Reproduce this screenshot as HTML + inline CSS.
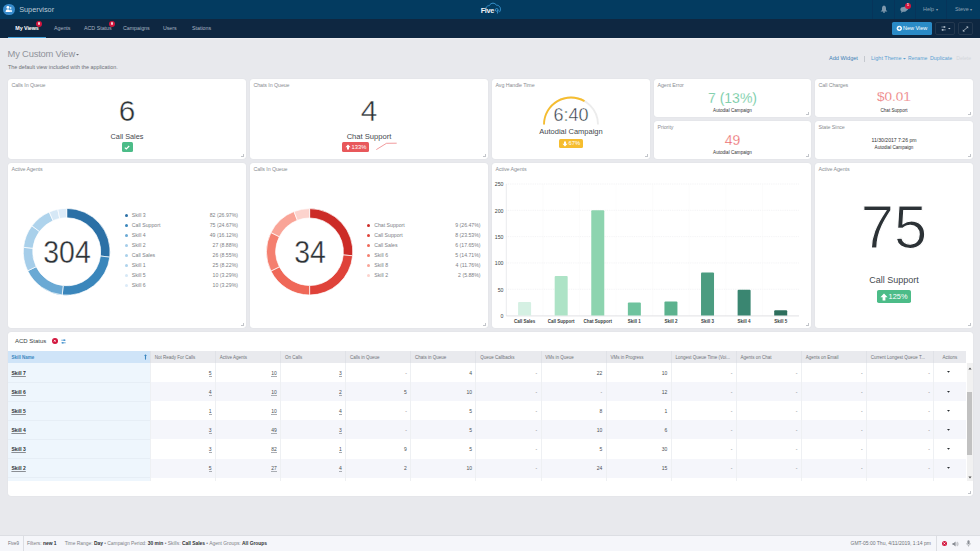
<!DOCTYPE html>
<html><head><meta charset="utf-8">
<style>
*{box-sizing:border-box;margin:0;padding:0}
html,body{width:980px;height:551px;overflow:hidden;background:#e8e9ed;font-family:"Liberation Sans",sans-serif;position:relative}
.a{position:absolute;white-space:nowrap;line-height:1}
.card{position:absolute;background:#fff;border-radius:3px;box-shadow:0 0 1px rgba(40,45,60,.12)}
.ct{position:absolute;left:3.5px;top:2.6px;font-size:5.3px;color:#8a8d92;line-height:6px;white-space:nowrap;letter-spacing:-0.08px}
.rh{position:absolute;right:2.4px;bottom:2.4px;width:2.6px;height:2.6px;border-right:0.8px solid #c2c5ca;border-bottom:0.8px solid #c2c5ca}
.c{text-align:center}
</style></head><body>

<!-- top bar -->
<div class="a" style="left:0;top:0;width:980px;height:19px;background:#033b60"></div>
<div class="a" style="left:0;top:19px;width:980px;height:18.8px;background:#0e2741"></div>
<div class="a" style="left:0;top:37.8px;width:980px;height:1.5px;background:#eeeff2"></div>


<!-- avatar -->
<div class="a" style="left:3.1px;top:3.7px;width:11.6px;height:11.6px;border-radius:50%;background:#378ccd"></div>
<svg class="a" style="left:0;top:0" width="20" height="19" viewBox="0 0 20 19"><circle cx="7.9" cy="7.4" r="1.45" fill="#fff"/><path d="M5.6 12 C5.7 9.9 6.6 9.3 7.9 9.3 C9.2 9.3 10.1 9.9 10.2 12 Z" fill="#fff"/><circle cx="10.6" cy="8" r="0.9" fill="#cfe6f7"/><path d="M9.9 12 L9.9 10.2 C10.2 9.5 11 9.5 11.3 9.7 C11.9 10 12.1 10.8 12.1 12 Z" fill="#cfe6f7"/></svg>
<div class="a" style="left:19.2px;top:6px;font-size:7.3px;color:#bccad6">Supervisor</div>

<!-- five9 logo -->
<svg class="a" style="left:476px;top:0" width="30" height="18" viewBox="476 0 30 18"><path d="M485.8 8.2 C486.4 6.3 487.9 5.5 489.3 5.7 C490 3.9 491.6 3.2 493 3.2 C494.6 3.2 495.8 4.1 496.4 5.2 C498.1 5.1 499.6 6.1 500.2 7.6 C500.8 9.1 500.4 10.8 499.3 12.2" fill="none" stroke="#3b98d6" stroke-width="0.9"/><circle cx="496.7" cy="9.9" r="1.35" fill="none" stroke="#3b98d6" stroke-width="0.9"/><path d="M498 10 L497.4 13.6" stroke="#3b98d6" stroke-width="0.9"/></svg>
<div class="a" style="left:480.7px;top:7.4px;font-size:7.4px;font-weight:700;color:#eef2f6;letter-spacing:-0.35px">Five</div>

<!-- right header -->
<div class="a" style="left:872px;top:0;width:1px;height:19px;background:#06345a"></div>
<div class="a" style="left:894px;top:0;width:1px;height:19px;background:#06345a"></div>
<div class="a" style="left:915px;top:0;width:1px;height:19px;background:#06345a"></div>
<div class="a" style="left:946px;top:0;width:1px;height:19px;background:#06345a"></div>
<svg class="a" style="left:879.5px;top:4.5px" width="8" height="8" viewBox="0 0 8 8"><path d="M4 0.4 C5.8 0.6 6 2.2 6 3.6 L6 4.9 L7.4 6.4 L0.6 6.4 L2 4.9 L2 3.6 C2 2.2 2.2 0.6 4 0.4 Z" fill="#7d97ab"/><circle cx="4" cy="7" r="0.9" fill="#7d97ab"/></svg>
<svg class="a" style="left:900px;top:5px" width="9" height="9" viewBox="0 0 9 9"><ellipse cx="3.6" cy="4.4" rx="3.2" ry="2.3" fill="#7d97ab"/><path d="M1.6 6 L1 8 L3.4 6.6 Z" fill="#7d97ab"/><ellipse cx="5.4" cy="3.6" rx="2.8" ry="2" fill="#7d97ab"/></svg>
<div class="a" style="left:904.8px;top:2.8px;width:6.4px;height:6.4px;border-radius:50%;background:#d2153d"></div>
<div class="a" style="left:906.9px;top:4.1px;font-size:3.6px;color:#fff;font-weight:700">1</div>
<div class="a" style="left:923px;top:6.8px;font-size:5.4px;color:#8ea2b4">Help <span style="font-size:4px">&#9662;</span></div>
<div class="a" style="left:955px;top:6.8px;font-size:5.4px;color:#8ea2b4">Steve <span style="font-size:4px">&#9662;</span></div>

<!-- nav -->
<div class="a" style="left:15.3px;top:26.3px;font-size:5.4px;font-weight:700;color:#fff;letter-spacing:-0.1px">My Views</div>
<div class="a" style="left:54px;top:26.3px;font-size:5.3px;color:#a7b4c2">Agents</div>
<div class="a" style="left:84px;top:26.3px;font-size:5.3px;color:#a7b4c2">ACD Status</div>
<div class="a" style="left:122.9px;top:26.3px;font-size:5.3px;color:#a7b4c2">Campaigns</div>
<div class="a" style="left:162.9px;top:26.3px;font-size:5.3px;color:#a7b4c2">Users</div>
<div class="a" style="left:192px;top:26.3px;font-size:5.3px;color:#a7b4c2">Stations</div>
<div class="a" style="left:35.8px;top:20.6px;width:6.6px;height:6.6px;border-radius:50%;background:#d2153d"></div>
<div class="a" style="left:37.9px;top:22.3px;width:2.4px;height:2.4px;border-radius:50%;background:#f6c8d0"></div>
<div class="a" style="left:108.8px;top:20.6px;width:6.6px;height:6.6px;border-radius:50%;background:#d2153d"></div>
<div class="a" style="left:110.9px;top:22.3px;width:2.4px;height:2.4px;border-radius:50%;background:#f6c8d0"></div>
<div class="a" style="left:8px;top:36.5px;width:38px;height:1.6px;background:#46a3dc"></div>

<!-- nav buttons -->
<div class="a" style="left:892px;top:22px;width:39.6px;height:13px;background:#2a8bc7;border-radius:1.5px"></div>
<svg class="a" style="left:896px;top:25px" width="7" height="7" viewBox="0 0 7 7"><circle cx="3.3" cy="3.3" r="2.6" fill="#fff"/><path d="M3.3 1.9 V4.7 M1.9 3.3 H4.7" stroke="#2a8bc7" stroke-width="0.9"/></svg>
<div class="a" style="left:903.1px;top:26px;font-size:5.6px;color:#fff;font-weight:400;letter-spacing:-0.08px">New View</div>
<div class="a" style="left:935.3px;top:22px;width:19.6px;height:13px;border:1px solid #23384f;border-radius:2px"></div>
<svg class="a" style="left:940.5px;top:26.3px" width="11" height="5" viewBox="0 0 11 5"><path d="M0.3 1 H4.8 M0.3 3.9 H4.8" stroke="#9aa8b6" stroke-width="0.7"/><rect x="2.6" y="0.2" width="1.4" height="1.6" fill="#b0bcc8"/><rect x="1" y="3.1" width="1.4" height="1.6" fill="#b0bcc8"/><path d="M7 2 L9.6 2 L8.3 3.2 Z" fill="#c5ced8"/></svg>
<div class="a" style="left:958px;top:22px;width:14.6px;height:13px;border:1px solid #23384f;border-radius:2px"></div>
<svg class="a" style="left:962px;top:25.5px" width="7" height="6" viewBox="0 0 7 6"><path d="M1.4 4.8 L5.6 1.2" stroke="#b6c1cc" stroke-width="0.8"/><path d="M4 0.6 H6.2 V2.6 Z M0.8 3.4 V5.4 H3 Z" fill="#b6c1cc"/></svg>


<!-- page title -->
<div class="a" style="left:7.6px;top:49.3px;font-size:9.4px;color:#90939b;letter-spacing:-0.2px">My Custom View</div>
<svg class="a" style="left:75.5px;top:54px" width="3" height="2" viewBox="0 0 3 2"><path d="M0 0 H3 L1.5 1.6 Z" fill="#6a6e76"/></svg>
<div class="a" style="left:8px;top:65.4px;font-size:5.4px;color:#6d7178">The default view included with the application.</div>
<div class="a" style="left:829px;top:56.4px;font-size:5.6px;color:#3d7fb6">Add Widget</div>
<div class="a" style="left:864px;top:55.8px;width:0.8px;height:6px;background:#c4c8ce"></div>
<div class="a" style="left:871px;top:56.4px;font-size:5.5px;color:#5a9fd2">Light Theme</div>
<svg class="a" style="left:902.5px;top:57.6px" width="3" height="2" viewBox="0 0 3 2"><path d="M0 0 H3 L1.5 1.6 Z" fill="#5a9fd2"/></svg>
<div class="a" style="left:908px;top:56.4px;font-size:5.1px;color:#5a9fd2">Rename</div>
<div class="a" style="left:930px;top:56.4px;font-size:5.3px;color:#5a9fd2">Duplicate</div>
<div class="a" style="left:956.3px;top:56.4px;font-size:5.1px;color:#d3d6db">Delete</div>

<!-- row 1 -->
<div class="card" style="left:8px;top:79px;width:238px;height:80px">
  <div class="ct">Calls In Queue</div><div class="rh"></div>
</div>
<div class="card" style="left:250px;top:79px;width:238px;height:80px">
  <div class="ct">Chats In Queue</div><div class="rh"></div>
</div>
<div class="card" style="left:492px;top:79px;width:158px;height:80px">
  <div class="ct">Avg Handle Time</div><div class="rh"></div>
</div>
<div class="card" style="left:654px;top:79px;width:157px;height:38px">
  <div class="ct">Agent Error</div><div class="rh"></div>
</div>
<div class="card" style="left:654px;top:121px;width:157px;height:38px">
  <div class="ct">Priority</div><div class="rh"></div>
</div>
<div class="card" style="left:815px;top:79px;width:158px;height:38px">
  <div class="ct">Call Charges</div><div class="rh"></div>
</div>
<div class="card" style="left:815px;top:121px;width:158px;height:38px">
  <div class="ct">State Since</div><div class="rh"></div>
</div>

<!-- row 2 -->
<div class="card" style="left:8px;top:163px;width:238px;height:165px">
  <div class="ct">Active Agents</div><div class="rh"></div>
</div>
<div class="card" style="left:250px;top:163px;width:238px;height:165px">
  <div class="ct">Calls In Queue</div><div class="rh"></div>
</div>
<div class="card" style="left:492px;top:163px;width:319px;height:165px">
  <div class="ct">Active Agents</div><div class="rh"></div>
</div>
<div class="card" style="left:815px;top:163px;width:158px;height:165px">
  <div class="ct">Active Agents</div><div class="rh"></div>
</div>

<!-- ACD -->
<div class="card" style="left:8px;top:332px;width:965px;height:164px">
  <div class="rh"></div>
</div>


<!-- row1 content -->
<div class="a c" style="left:8px;width:238px;top:96.4px;font-size:29.8px;color:#2c3236;-webkit-text-stroke:0.45px #fff">6</div>
<div class="a c" style="left:8px;width:238px;top:132.5px;font-size:7.3px;color:#454a4f">Call Sales</div>
<div class="a" style="left:121.6px;top:142px;width:11.3px;height:9.7px;background:#4cbc88;border-radius:1.5px"></div>
<svg class="a" style="left:124px;top:144.5px" width="6" height="5" viewBox="0 0 6 5"><path d="M0.8 2.6 L2.3 4 L5.2 1" fill="none" stroke="#fff" stroke-width="1.2"/></svg>

<div class="a c" style="left:250px;width:238px;top:96.4px;font-size:29.8px;color:#2c3236;-webkit-text-stroke:0.45px #fff">4</div>
<div class="a c" style="left:250px;width:238px;top:132.5px;font-size:7.6px;color:#454a4f">Chat Support</div>
<div class="a" style="left:342px;top:142px;width:27px;height:9.7px;background:#e8585b;border-radius:1.5px"></div>
<svg class="a" style="left:344.5px;top:144.1px" width="6" height="6" viewBox="0 0 6 6"><path d="M3 0.6 L5.6 3.2 L4 3.2 L4 5.6 L2 5.6 L2 3.2 L0.4 3.2 Z" fill="#fff"/></svg>
<div class="a" style="left:351.5px;top:144.6px;font-size:5.8px;color:#fff">133%</div>
<svg class="a" style="left:375px;top:142px" width="24" height="9" viewBox="0 0 24 9"><path d="M1.3 7.6 L11.5 1.3 L21.7 1.2" fill="none" stroke="#e8585b" stroke-width="0.6"/></svg>

<svg class="a" style="left:540px;top:93px" width="62" height="34" viewBox="0 0 62 34"><path d="M4 31.5 A27 27 0 0 1 58 31.5" fill="none" stroke="#ececec" stroke-width="1.8"/><path d="M4 31.5 A27 27 0 0 1 44.5 8.1" fill="none" stroke="#f6bd2f" stroke-width="1.8"/></svg>
<div class="a c" style="left:492px;width:158px;top:105.5px;font-size:18px;color:#2f3a44;-webkit-text-stroke:0.4px #fff">6:40</div>
<div class="a c" style="left:492px;width:158px;top:127.7px;font-size:7.5px;color:#454a4f">Autodial Campaign</div>
<div class="a" style="left:559px;top:138.5px;width:23.8px;height:9.8px;background:#f6bd2f;border-radius:1.5px"></div>
<svg class="a" style="left:561.5px;top:140.8px" width="6" height="6" viewBox="0 0 6 6"><path d="M3 5.4 L5.6 2.8 L4 2.8 L4 0.4 L2 0.4 L2 2.8 L0.4 2.8 Z" fill="#fff"/></svg>
<div class="a" style="left:568.5px;top:141.3px;font-size:5.8px;color:#fff">67%</div>

<div class="a c" style="left:654px;width:157px;top:90.8px;font-size:14px;color:#4cbc88;-webkit-text-stroke:0.3px #fff">7 (13%)</div>
<div class="a c" style="left:654px;width:157px;top:108.9px;font-size:4.6px;color:#333">Autodial Campaign</div>
<div class="a c" style="left:654px;width:157px;top:132.5px;font-size:14px;color:#e8585b;-webkit-text-stroke:0.3px #fff">49</div>
<div class="a c" style="left:654px;width:157px;top:151.1px;font-size:4.6px;color:#333">Autodial Campaign</div>
<div class="a c" style="left:815px;width:158px;top:90px;font-size:13.5px;color:#e8585b;-webkit-text-stroke:0.3px #fff">$0.01</div>
<div class="a c" style="left:815px;width:158px;top:108.9px;font-size:4.6px;color:#333">Chat Support</div>
<div class="a c" style="left:815px;width:158px;top:137.7px;font-size:5.1px;color:#333">11/30/2017 7:26 pm</div>
<div class="a c" style="left:815px;width:158px;top:145.6px;font-size:4.6px;color:#333">Autodial Campaign</div>

<!-- row2 content -->
<svg class="a" style="left:0;top:0" width="980" height="551" viewBox="0 0 980 551"><path d="M66.70 208.40 A43.4 43.4 0 0 1 109.77 257.17 L100.44 256.01 A34.0 34.0 0 0 0 66.70 217.80 Z" fill="#2b70a6" stroke="#fff" stroke-width="0.7"/>
<path d="M109.77 257.17 A43.4 43.4 0 0 1 62.22 294.97 L63.19 285.62 A34.0 34.0 0 0 0 100.44 256.01 Z" fill="#3a86bb" stroke="#fff" stroke-width="0.7"/>
<path d="M62.22 294.97 A43.4 43.4 0 0 1 27.71 270.86 L36.15 266.73 A34.0 34.0 0 0 0 63.19 285.62 Z" fill="#6aa9d4" stroke="#fff" stroke-width="0.7"/>
<path d="M27.71 270.86 A43.4 43.4 0 0 1 23.53 247.32 L32.88 248.29 A34.0 34.0 0 0 0 36.15 266.73 Z" fill="#a5cde9" stroke="#fff" stroke-width="0.7"/>
<path d="M23.53 247.32 A43.4 43.4 0 0 1 31.91 225.86 L39.44 231.48 A34.0 34.0 0 0 0 32.88 248.29 Z" fill="#a9d0ea" stroke="#fff" stroke-width="0.7"/>
<path d="M31.91 225.86 A43.4 43.4 0 0 1 49.27 212.06 L53.04 220.66 A34.0 34.0 0 0 0 39.44 231.48 Z" fill="#aed3ec" stroke="#fff" stroke-width="0.7"/>
<path d="M49.27 212.06 A43.4 43.4 0 0 1 57.79 209.32 L59.72 218.52 A34.0 34.0 0 0 0 53.04 220.66 Z" fill="#d6e8f6" stroke="#fff" stroke-width="0.7"/>
<path d="M57.79 209.32 A43.4 43.4 0 0 1 66.70 208.40 L66.70 217.80 A34.0 34.0 0 0 0 59.72 218.52 Z" fill="#dcebf8" stroke="#fff" stroke-width="0.7"/><path d="M309.60 208.60 A43.2 43.2 0 0 1 352.62 255.79 L343.26 254.92 A33.8 33.8 0 0 0 309.60 218.00 Z" fill="#cc2b27" stroke="#fff" stroke-width="0.7"/>
<path d="M352.62 255.79 A43.2 43.2 0 0 1 309.60 295.00 L309.60 285.60 A33.8 33.8 0 0 0 343.26 254.92 Z" fill="#df4239" stroke="#fff" stroke-width="0.7"/>
<path d="M309.60 295.00 A43.2 43.2 0 0 1 270.93 271.06 L279.34 266.87 A33.8 33.8 0 0 0 309.60 285.60 Z" fill="#ef6858" stroke="#fff" stroke-width="0.7"/>
<path d="M270.93 271.06 A43.2 43.2 0 0 1 270.93 232.54 L279.34 236.73 A33.8 33.8 0 0 0 279.34 266.87 Z" fill="#f47f6f" stroke="#fff" stroke-width="0.7"/>
<path d="M270.93 232.54 A43.2 43.2 0 0 1 293.99 211.52 L297.39 220.28 A33.8 33.8 0 0 0 279.34 236.73 Z" fill="#f9a497" stroke="#fff" stroke-width="0.7"/>
<path d="M293.99 211.52 A43.2 43.2 0 0 1 309.60 208.60 L309.60 218.00 A33.8 33.8 0 0 0 297.39 220.28 Z" fill="#fcd3cd" stroke="#fff" stroke-width="0.7"/></svg>
<div class="a c" style="left:26.9px;width:80px;top:236.6px;font-size:30.6px;color:#2c3236;-webkit-text-stroke:0.35px #fff;transform:scaleX(0.93)">304</div>
<div class="a c" style="left:269.6px;width:80px;top:236.6px;font-size:30.6px;color:#2c3236;-webkit-text-stroke:0.35px #fff;transform:scaleX(0.93)">34</div>
<div class="a" style="left:124.7px;top:213.9px;width:3px;height:3px;border-radius:50%;background:#2b70a6"></div><div class="a" style="left:131.8px;top:213.1px;font-size:5.2px;color:#7d8186">Skill 3</div><div class="a" style="left:138px;width:100px;text-align:right;top:213.1px;font-size:5.2px;color:#7d8186">82 (26.97%)</div>
<div class="a" style="left:124.7px;top:223.9px;width:3px;height:3px;border-radius:50%;background:#3a86bb"></div><div class="a" style="left:131.8px;top:223.1px;font-size:5.2px;color:#7d8186">Call Support</div><div class="a" style="left:138px;width:100px;text-align:right;top:223.1px;font-size:5.2px;color:#7d8186">75 (24.67%)</div>
<div class="a" style="left:124.7px;top:233.9px;width:3px;height:3px;border-radius:50%;background:#6aa9d4"></div><div class="a" style="left:131.8px;top:233.1px;font-size:5.2px;color:#7d8186">Skill 4</div><div class="a" style="left:138px;width:100px;text-align:right;top:233.1px;font-size:5.2px;color:#7d8186">49 (16.12%)</div>
<div class="a" style="left:124.7px;top:243.9px;width:3px;height:3px;border-radius:50%;background:#a5cde9"></div><div class="a" style="left:131.8px;top:243.1px;font-size:5.2px;color:#7d8186">Skill 2</div><div class="a" style="left:138px;width:100px;text-align:right;top:243.1px;font-size:5.2px;color:#7d8186">27 (8.88%)</div>
<div class="a" style="left:124.7px;top:253.9px;width:3px;height:3px;border-radius:50%;background:#a9d0ea"></div><div class="a" style="left:131.8px;top:253.1px;font-size:5.2px;color:#7d8186">Call Sales</div><div class="a" style="left:138px;width:100px;text-align:right;top:253.1px;font-size:5.2px;color:#7d8186">26 (8.55%)</div>
<div class="a" style="left:124.7px;top:263.9px;width:3px;height:3px;border-radius:50%;background:#aed3ec"></div><div class="a" style="left:131.8px;top:263.1px;font-size:5.2px;color:#7d8186">Skill 1</div><div class="a" style="left:138px;width:100px;text-align:right;top:263.1px;font-size:5.2px;color:#7d8186">25 (8.22%)</div>
<div class="a" style="left:124.7px;top:273.9px;width:3px;height:3px;border-radius:50%;background:#d6e8f6"></div><div class="a" style="left:131.8px;top:273.1px;font-size:5.2px;color:#7d8186">Skill 5</div><div class="a" style="left:138px;width:100px;text-align:right;top:273.1px;font-size:5.2px;color:#7d8186">10 (3.29%)</div>
<div class="a" style="left:124.7px;top:283.9px;width:3px;height:3px;border-radius:50%;background:#dcebf8"></div><div class="a" style="left:131.8px;top:283.1px;font-size:5.2px;color:#7d8186">Skill 6</div><div class="a" style="left:138px;width:100px;text-align:right;top:283.1px;font-size:5.2px;color:#7d8186">10 (3.29%)</div>
<div class="a" style="left:367px;top:223.7px;width:3px;height:3px;border-radius:50%;background:#cc2b27"></div><div class="a" style="left:374.2px;top:222.9px;font-size:5.2px;color:#7d8186">Chat Support</div><div class="a" style="left:380.6px;width:100px;text-align:right;top:222.9px;font-size:5.2px;color:#7d8186">9 (26.47%)</div>
<div class="a" style="left:367px;top:233.7px;width:3px;height:3px;border-radius:50%;background:#df4239"></div><div class="a" style="left:374.2px;top:232.9px;font-size:5.2px;color:#7d8186">Call Support</div><div class="a" style="left:380.6px;width:100px;text-align:right;top:232.9px;font-size:5.2px;color:#7d8186">8 (23.53%)</div>
<div class="a" style="left:367px;top:243.7px;width:3px;height:3px;border-radius:50%;background:#ef6858"></div><div class="a" style="left:374.2px;top:242.9px;font-size:5.2px;color:#7d8186">Call Sales</div><div class="a" style="left:380.6px;width:100px;text-align:right;top:242.9px;font-size:5.2px;color:#7d8186">6 (17.65%)</div>
<div class="a" style="left:367px;top:253.7px;width:3px;height:3px;border-radius:50%;background:#f47f6f"></div><div class="a" style="left:374.2px;top:252.9px;font-size:5.2px;color:#7d8186">Skill 6</div><div class="a" style="left:380.6px;width:100px;text-align:right;top:252.9px;font-size:5.2px;color:#7d8186">5 (14.71%)</div>
<div class="a" style="left:367px;top:263.7px;width:3px;height:3px;border-radius:50%;background:#f9a497"></div><div class="a" style="left:374.2px;top:262.9px;font-size:5.2px;color:#7d8186">Skill 8</div><div class="a" style="left:380.6px;width:100px;text-align:right;top:262.9px;font-size:5.2px;color:#7d8186">4 (11.76%)</div>
<div class="a" style="left:367px;top:273.7px;width:3px;height:3px;border-radius:50%;background:#fcd3cd"></div><div class="a" style="left:374.2px;top:272.9px;font-size:5.2px;color:#7d8186">Skill 2</div><div class="a" style="left:380.6px;width:100px;text-align:right;top:272.9px;font-size:5.2px;color:#7d8186">2 (5.88%)</div>
<svg class="a" style="left:0;top:0" width="980" height="551" viewBox="0 0 980 551"><line x1="506.3" y1="289.28" x2="799.0" y2="289.28" stroke="#e9eaed" stroke-width="0.6" stroke-dasharray="0.9 0.9"/><line x1="506.3" y1="262.96" x2="799.0" y2="262.96" stroke="#e9eaed" stroke-width="0.6" stroke-dasharray="0.9 0.9"/><line x1="506.3" y1="236.64" x2="799.0" y2="236.64" stroke="#e9eaed" stroke-width="0.6" stroke-dasharray="0.9 0.9"/><line x1="506.3" y1="210.32" x2="799.0" y2="210.32" stroke="#e9eaed" stroke-width="0.6" stroke-dasharray="0.9 0.9"/><line x1="506.3" y1="184.00" x2="799.0" y2="184.00" stroke="#e9eaed" stroke-width="0.6" stroke-dasharray="0.9 0.9"/><line x1="542.89" y1="184" x2="542.89" y2="315.6" stroke="#f8f8f9" stroke-width="0.5"/><line x1="579.48" y1="184" x2="579.48" y2="315.6" stroke="#f8f8f9" stroke-width="0.5"/><line x1="616.06" y1="184" x2="616.06" y2="315.6" stroke="#f8f8f9" stroke-width="0.5"/><line x1="652.65" y1="184" x2="652.65" y2="315.6" stroke="#f8f8f9" stroke-width="0.5"/><line x1="689.24" y1="184" x2="689.24" y2="315.6" stroke="#f8f8f9" stroke-width="0.5"/><line x1="725.83" y1="184" x2="725.83" y2="315.6" stroke="#f8f8f9" stroke-width="0.5"/><line x1="762.41" y1="184" x2="762.41" y2="315.6" stroke="#f8f8f9" stroke-width="0.5"/><line x1="506.3" y1="184" x2="506.3" y2="316.1" stroke="#dcdde1" stroke-width="0.6"/><line x1="506.3" y1="315.90000000000003" x2="799.0" y2="315.90000000000003" stroke="#d4d6da" stroke-width="0.7"/><path d="M518.09 315.60 V302.91 Q518.09 301.91 519.09 301.91 H530.09 Q531.09 301.91 531.09 302.91 V315.60 Z" fill="#d5f0e3"/><path d="M554.68 315.60 V277.12 Q554.68 276.12 555.68 276.12 H566.68 Q567.68 276.12 567.68 277.12 V315.60 Z" fill="#ade3c6"/><path d="M591.27 315.60 V211.32 Q591.27 210.32 592.27 210.32 H603.27 Q604.27 210.32 604.27 211.32 V315.60 Z" fill="#8dd4af"/><path d="M627.86 315.60 V303.44 Q627.86 302.44 628.86 302.44 H639.86 Q640.86 302.44 640.86 303.44 V315.60 Z" fill="#6fc39e"/><path d="M664.44 315.60 V302.39 Q664.44 301.39 665.44 301.39 H676.44 Q677.44 301.39 677.44 302.39 V315.60 Z" fill="#5cb28e"/><path d="M701.03 315.60 V273.44 Q701.03 272.44 702.03 272.44 H713.03 Q714.03 272.44 714.03 273.44 V315.60 Z" fill="#4b9c80"/><path d="M737.62 315.60 V290.81 Q737.62 289.81 738.62 289.81 H749.62 Q750.62 289.81 750.62 290.81 V315.60 Z" fill="#3a8671"/><path d="M774.21 315.60 V311.34 Q774.21 310.34 775.21 310.34 H786.21 Q787.21 310.34 787.21 311.34 V315.60 Z" fill="#2e6f5d"/></svg>
<div class="a" style="left:478.5px;width:25px;text-align:right;top:314.00px;font-size:5.2px;color:#3a3f44">0</div><div class="a" style="left:478.5px;width:25px;text-align:right;top:287.68px;font-size:5.2px;color:#3a3f44">50</div><div class="a" style="left:478.5px;width:25px;text-align:right;top:261.36px;font-size:5.2px;color:#3a3f44">100</div><div class="a" style="left:478.5px;width:25px;text-align:right;top:235.04px;font-size:5.2px;color:#3a3f44">150</div><div class="a" style="left:478.5px;width:25px;text-align:right;top:208.72px;font-size:5.2px;color:#3a3f44">200</div><div class="a" style="left:478.5px;width:25px;text-align:right;top:182.40px;font-size:5.2px;color:#3a3f44">250</div>
<div class="a c" style="left:504.59px;width:40px;top:319.9px;font-size:4.5px;font-weight:700;color:#3a3f44">Call Sales</div><div class="a c" style="left:541.18px;width:40px;top:319.9px;font-size:4.5px;font-weight:700;color:#3a3f44">Call Support</div><div class="a c" style="left:577.77px;width:40px;top:319.9px;font-size:4.5px;font-weight:700;color:#3a3f44">Chat Support</div><div class="a c" style="left:614.36px;width:40px;top:319.9px;font-size:4.5px;font-weight:700;color:#3a3f44">Skill 1</div><div class="a c" style="left:650.94px;width:40px;top:319.9px;font-size:4.5px;font-weight:700;color:#3a3f44">Skill 2</div><div class="a c" style="left:687.53px;width:40px;top:319.9px;font-size:4.5px;font-weight:700;color:#3a3f44">Skill 3</div><div class="a c" style="left:724.12px;width:40px;top:319.9px;font-size:4.5px;font-weight:700;color:#3a3f44">Skill 4</div><div class="a c" style="left:760.71px;width:40px;top:319.9px;font-size:4.5px;font-weight:700;color:#3a3f44">Skill 5</div>
<div class="a c" style="left:815px;width:158px;top:196.4px;font-size:61.8px;color:#2c3236;-webkit-text-stroke:1.1px #fff;transform:scaleX(0.965)">75</div>
<div class="a c" style="left:815px;width:158px;top:275.5px;font-size:9px;color:#454a4f">Call Support</div>
<div class="a" style="left:876.6px;top:290.2px;width:34px;height:12.7px;background:#4cbc88;border-radius:1.8px"></div>
<svg class="a" style="left:879.6px;top:292.6px" width="8" height="8" viewBox="0 0 8 8"><path d="M4 0.6 L7.6 4.2 L5.4 4.2 L5.4 7.6 L2.6 7.6 L2.6 4.2 L0.4 4.2 Z" fill="#fff"/></svg>
<div class="a" style="left:888.6px;top:292.8px;font-size:7.4px;color:#fff">125%</div>

<!-- ACD content -->
<div class="a" style="left:15px;top:338px;font-size:6px;color:#3a3f44">ACD Status</div>
<div class="a" style="left:51.8px;top:337.8px;width:6.4px;height:6.4px;border-radius:50%;background:#d2153d"></div><svg class="a" style="left:53.2px;top:339.2px" width="3.6" height="3.6" viewBox="0 0 4 4"><path d="M1 1 L3 3 M3 1 L1 3" stroke="#fff" stroke-width="0.9"/></svg>
<svg class="a" style="left:61px;top:338.6px" width="5" height="5" viewBox="0 0 5 5"><path d="M0.3 1.2 H4.7 M0.3 3.8 H4.7" stroke="#3a8ccc" stroke-width="0.7"/><rect x="2.6" y="0.4" width="1.2" height="1.6" fill="#3a8ccc"/><rect x="1.2" y="3" width="1.2" height="1.6" fill="#3a8ccc"/></svg>
<div class="a" style="left:8px;top:350.7px;width:958px;height:12.4px;background:#e9eaee"></div><div class="a" style="left:8px;top:350.7px;width:142.3px;height:12.4px;background:#cfe4f8"></div>
<div class="a" style="left:8px;top:363.1px;width:142.3px;height:117.60px;background:#eef6fd"></div><div class="a" style="left:150.3px;top:363.10px;width:815.7px;height:19.10px;background:#ffffff"></div><div class="a" style="left:150.3px;top:382.20px;width:815.7px;height:19.10px;background:#f5f6fb"></div><div class="a" style="left:8px;top:381.95px;width:142.3px;height:0.5px;background:#e6eef6"></div>
<div class="a" style="left:150.3px;top:401.30px;width:815.7px;height:19.10px;background:#ffffff"></div><div class="a" style="left:8px;top:401.05px;width:142.3px;height:0.5px;background:#e6eef6"></div>
<div class="a" style="left:150.3px;top:420.40px;width:815.7px;height:19.10px;background:#f5f6fb"></div><div class="a" style="left:8px;top:420.15px;width:142.3px;height:0.5px;background:#e6eef6"></div>
<div class="a" style="left:150.3px;top:439.50px;width:815.7px;height:19.10px;background:#ffffff"></div><div class="a" style="left:8px;top:439.25px;width:142.3px;height:0.5px;background:#e6eef6"></div>
<div class="a" style="left:150.3px;top:458.60px;width:815.7px;height:19.10px;background:#f5f6fb"></div><div class="a" style="left:8px;top:458.35px;width:142.3px;height:0.5px;background:#e6eef6"></div>
<div class="a" style="left:150.3px;top:477.70px;width:815.7px;height:3.00px;background:#ffffff"></div><div class="a" style="left:8px;top:477.45px;width:142.3px;height:0.5px;background:#e6eef6"></div>
<div class="a" style="left:149.90px;top:350.7px;width:0.8px;height:12.4px;background:#e0e2e7"></div><div class="a" style="left:149.90px;top:363.1px;width:0.8px;height:117.6px;background:#eef0f3"></div><div class="a" style="left:215.00px;top:350.7px;width:0.8px;height:12.4px;background:#e0e2e7"></div><div class="a" style="left:215.00px;top:363.1px;width:0.8px;height:117.6px;background:#eef0f3"></div><div class="a" style="left:280.10px;top:350.7px;width:0.8px;height:12.4px;background:#e0e2e7"></div><div class="a" style="left:280.10px;top:363.1px;width:0.8px;height:117.6px;background:#eef0f3"></div><div class="a" style="left:345.20px;top:350.7px;width:0.8px;height:12.4px;background:#e0e2e7"></div><div class="a" style="left:345.20px;top:363.1px;width:0.8px;height:117.6px;background:#eef0f3"></div><div class="a" style="left:410.30px;top:350.7px;width:0.8px;height:12.4px;background:#e0e2e7"></div><div class="a" style="left:410.30px;top:363.1px;width:0.8px;height:117.6px;background:#eef0f3"></div><div class="a" style="left:475.40px;top:350.7px;width:0.8px;height:12.4px;background:#e0e2e7"></div><div class="a" style="left:475.40px;top:363.1px;width:0.8px;height:117.6px;background:#eef0f3"></div><div class="a" style="left:540.50px;top:350.7px;width:0.8px;height:12.4px;background:#e0e2e7"></div><div class="a" style="left:540.50px;top:363.1px;width:0.8px;height:117.6px;background:#eef0f3"></div><div class="a" style="left:605.60px;top:350.7px;width:0.8px;height:12.4px;background:#e0e2e7"></div><div class="a" style="left:605.60px;top:363.1px;width:0.8px;height:117.6px;background:#eef0f3"></div><div class="a" style="left:670.70px;top:350.7px;width:0.8px;height:12.4px;background:#e0e2e7"></div><div class="a" style="left:670.70px;top:363.1px;width:0.8px;height:117.6px;background:#eef0f3"></div><div class="a" style="left:735.80px;top:350.7px;width:0.8px;height:12.4px;background:#e0e2e7"></div><div class="a" style="left:735.80px;top:363.1px;width:0.8px;height:117.6px;background:#eef0f3"></div><div class="a" style="left:800.90px;top:350.7px;width:0.8px;height:12.4px;background:#e0e2e7"></div><div class="a" style="left:800.90px;top:363.1px;width:0.8px;height:117.6px;background:#eef0f3"></div><div class="a" style="left:866.00px;top:350.7px;width:0.8px;height:12.4px;background:#e0e2e7"></div><div class="a" style="left:866.00px;top:363.1px;width:0.8px;height:117.6px;background:#eef0f3"></div><div class="a" style="left:933.20px;top:350.7px;width:1.3px;height:12.4px;background:#e0e2e7"></div><div class="a" style="left:933.20px;top:363.1px;width:1.3px;height:117.6px;background:#eef0f3"></div>
<div class="a" style="left:11.4px;top:355.7px;font-size:4.5px;font-weight:700;color:#3a86c0">Skill Name</div><div class="a" style="left:154.70px;top:355.8px;font-size:4.5px;color:#6f7378">Not Ready For Calls</div><div class="a" style="left:219.80px;top:355.8px;font-size:4.5px;color:#6f7378">Active Agents</div><div class="a" style="left:284.90px;top:355.8px;font-size:4.5px;color:#6f7378">On Calls</div><div class="a" style="left:350.00px;top:355.8px;font-size:4.5px;color:#6f7378">Calls in Queue</div><div class="a" style="left:415.10px;top:355.8px;font-size:4.5px;color:#6f7378">Chats in Queue</div><div class="a" style="left:480.20px;top:355.8px;font-size:4.5px;color:#6f7378">Queue Callbacks</div><div class="a" style="left:545.30px;top:355.8px;font-size:4.5px;color:#6f7378">VMs in Queue</div><div class="a" style="left:610.40px;top:355.8px;font-size:4.5px;color:#6f7378">VMs in Progress</div><div class="a" style="left:675.50px;top:355.8px;font-size:4.5px;color:#6f7378">Longest Queue Time (Voi...</div><div class="a" style="left:740.60px;top:355.8px;font-size:4.5px;color:#6f7378">Agents on Chat</div><div class="a" style="left:805.70px;top:355.8px;font-size:4.5px;color:#6f7378">Agents on Email</div><div class="a" style="left:870.80px;top:355.8px;font-size:4.5px;color:#6f7378">Current Longest Queue T...</div><div class="a c" style="left:933.60px;width:32.4px;top:355.8px;font-size:4.5px;color:#6f7378">Actions</div><svg class="a" style="left:143.8px;top:354.4px" width="3" height="6" viewBox="0 0 3 6"><path d="M1.5 1.5 V5.6" stroke="#3a86c0" stroke-width="1.1"/><path d="M0.1 2 L1.5 0.3 L2.9 2 Z" fill="#3a86c0"/></svg>
<div class="a" style="left:11.4px;top:370.55px;font-size:5px;font-weight:700;color:#2f3336;text-decoration:underline;text-decoration-thickness:0.4px;text-underline-offset:0.7px;text-decoration-color:#8a8e94">Skill 7</div><div class="a" style="left:181.60px;width:30px;text-align:right;top:370.65px;font-size:5px;color:#4a4f54"><span style="border-bottom:0.6px dashed #a9adb3;padding-bottom:0px">5</span></div><div class="a" style="left:246.70px;width:30px;text-align:right;top:370.65px;font-size:5px;color:#4a4f54"><span style="border-bottom:0.6px dashed #a9adb3;padding-bottom:0px">10</span></div><div class="a" style="left:311.80px;width:30px;text-align:right;top:370.65px;font-size:5px;color:#4a4f54"><span style="border-bottom:0.6px dashed #a9adb3;padding-bottom:0px">3</span></div><div class="a" style="left:376.90px;width:30px;text-align:right;top:370.65px;font-size:5px;color:#6f7378"><span style="padding-bottom:0px">-</span></div><div class="a" style="left:442.00px;width:30px;text-align:right;top:370.65px;font-size:5px;color:#4a4f54"><span style="padding-bottom:0px">4</span></div><div class="a" style="left:507.10px;width:30px;text-align:right;top:370.65px;font-size:5px;color:#6f7378"><span style="padding-bottom:0px">-</span></div><div class="a" style="left:572.20px;width:30px;text-align:right;top:370.65px;font-size:5px;color:#4a4f54"><span style="padding-bottom:0px">22</span></div><div class="a" style="left:637.30px;width:30px;text-align:right;top:370.65px;font-size:5px;color:#4a4f54"><span style="padding-bottom:0px">10</span></div><div class="a" style="left:702.40px;width:30px;text-align:right;top:370.65px;font-size:5px;color:#6f7378"><span style="padding-bottom:0px">-</span></div><div class="a" style="left:767.50px;width:30px;text-align:right;top:370.65px;font-size:5px;color:#6f7378"><span style="padding-bottom:0px">-</span></div><div class="a" style="left:832.60px;width:30px;text-align:right;top:370.65px;font-size:5px;color:#6f7378"><span style="padding-bottom:0px">-</span></div><div class="a" style="left:899.80px;width:30px;text-align:right;top:370.65px;font-size:5px;color:#6f7378"><span style="padding-bottom:0px">-</span></div><svg class="a" style="left:947.3px;top:371.45px" width="3" height="2" viewBox="0 0 3 2"><path d="M0 0 H3 L1.5 1.8 Z" fill="#2a2f33"/></svg>
<div class="a" style="left:11.4px;top:389.65px;font-size:5px;font-weight:700;color:#2f3336;text-decoration:underline;text-decoration-thickness:0.4px;text-underline-offset:0.7px;text-decoration-color:#8a8e94">Skill 6</div><div class="a" style="left:181.60px;width:30px;text-align:right;top:389.75px;font-size:5px;color:#4a4f54"><span style="border-bottom:0.6px dashed #a9adb3;padding-bottom:0px">4</span></div><div class="a" style="left:246.70px;width:30px;text-align:right;top:389.75px;font-size:5px;color:#4a4f54"><span style="border-bottom:0.6px dashed #a9adb3;padding-bottom:0px">10</span></div><div class="a" style="left:311.80px;width:30px;text-align:right;top:389.75px;font-size:5px;color:#4a4f54"><span style="border-bottom:0.6px dashed #a9adb3;padding-bottom:0px">2</span></div><div class="a" style="left:376.90px;width:30px;text-align:right;top:389.75px;font-size:5px;color:#4a4f54"><span style="padding-bottom:0px">5</span></div><div class="a" style="left:442.00px;width:30px;text-align:right;top:389.75px;font-size:5px;color:#4a4f54"><span style="padding-bottom:0px">10</span></div><div class="a" style="left:507.10px;width:30px;text-align:right;top:389.75px;font-size:5px;color:#6f7378"><span style="padding-bottom:0px">-</span></div><div class="a" style="left:572.20px;width:30px;text-align:right;top:389.75px;font-size:5px;color:#6f7378"><span style="padding-bottom:0px">-</span></div><div class="a" style="left:637.30px;width:30px;text-align:right;top:389.75px;font-size:5px;color:#4a4f54"><span style="padding-bottom:0px">12</span></div><div class="a" style="left:702.40px;width:30px;text-align:right;top:389.75px;font-size:5px;color:#6f7378"><span style="padding-bottom:0px">-</span></div><div class="a" style="left:767.50px;width:30px;text-align:right;top:389.75px;font-size:5px;color:#6f7378"><span style="padding-bottom:0px">-</span></div><div class="a" style="left:832.60px;width:30px;text-align:right;top:389.75px;font-size:5px;color:#6f7378"><span style="padding-bottom:0px">-</span></div><div class="a" style="left:899.80px;width:30px;text-align:right;top:389.75px;font-size:5px;color:#6f7378"><span style="padding-bottom:0px">-</span></div><svg class="a" style="left:947.3px;top:390.55px" width="3" height="2" viewBox="0 0 3 2"><path d="M0 0 H3 L1.5 1.8 Z" fill="#2a2f33"/></svg>
<div class="a" style="left:11.4px;top:408.75px;font-size:5px;font-weight:700;color:#2f3336;text-decoration:underline;text-decoration-thickness:0.4px;text-underline-offset:0.7px;text-decoration-color:#8a8e94">Skill 5</div><div class="a" style="left:181.60px;width:30px;text-align:right;top:408.85px;font-size:5px;color:#4a4f54"><span style="border-bottom:0.6px dashed #a9adb3;padding-bottom:0px">1</span></div><div class="a" style="left:246.70px;width:30px;text-align:right;top:408.85px;font-size:5px;color:#4a4f54"><span style="border-bottom:0.6px dashed #a9adb3;padding-bottom:0px">10</span></div><div class="a" style="left:311.80px;width:30px;text-align:right;top:408.85px;font-size:5px;color:#4a4f54"><span style="border-bottom:0.6px dashed #a9adb3;padding-bottom:0px">4</span></div><div class="a" style="left:376.90px;width:30px;text-align:right;top:408.85px;font-size:5px;color:#6f7378"><span style="padding-bottom:0px">-</span></div><div class="a" style="left:442.00px;width:30px;text-align:right;top:408.85px;font-size:5px;color:#4a4f54"><span style="padding-bottom:0px">5</span></div><div class="a" style="left:507.10px;width:30px;text-align:right;top:408.85px;font-size:5px;color:#6f7378"><span style="padding-bottom:0px">-</span></div><div class="a" style="left:572.20px;width:30px;text-align:right;top:408.85px;font-size:5px;color:#4a4f54"><span style="padding-bottom:0px">8</span></div><div class="a" style="left:637.30px;width:30px;text-align:right;top:408.85px;font-size:5px;color:#4a4f54"><span style="padding-bottom:0px">1</span></div><div class="a" style="left:702.40px;width:30px;text-align:right;top:408.85px;font-size:5px;color:#6f7378"><span style="padding-bottom:0px">-</span></div><div class="a" style="left:767.50px;width:30px;text-align:right;top:408.85px;font-size:5px;color:#6f7378"><span style="padding-bottom:0px">-</span></div><div class="a" style="left:832.60px;width:30px;text-align:right;top:408.85px;font-size:5px;color:#6f7378"><span style="padding-bottom:0px">-</span></div><div class="a" style="left:899.80px;width:30px;text-align:right;top:408.85px;font-size:5px;color:#6f7378"><span style="padding-bottom:0px">-</span></div><svg class="a" style="left:947.3px;top:409.65px" width="3" height="2" viewBox="0 0 3 2"><path d="M0 0 H3 L1.5 1.8 Z" fill="#2a2f33"/></svg>
<div class="a" style="left:11.4px;top:427.85px;font-size:5px;font-weight:700;color:#2f3336;text-decoration:underline;text-decoration-thickness:0.4px;text-underline-offset:0.7px;text-decoration-color:#8a8e94">Skill 4</div><div class="a" style="left:181.60px;width:30px;text-align:right;top:427.95px;font-size:5px;color:#4a4f54"><span style="border-bottom:0.6px dashed #a9adb3;padding-bottom:0px">3</span></div><div class="a" style="left:246.70px;width:30px;text-align:right;top:427.95px;font-size:5px;color:#4a4f54"><span style="border-bottom:0.6px dashed #a9adb3;padding-bottom:0px">49</span></div><div class="a" style="left:311.80px;width:30px;text-align:right;top:427.95px;font-size:5px;color:#4a4f54"><span style="border-bottom:0.6px dashed #a9adb3;padding-bottom:0px">3</span></div><div class="a" style="left:376.90px;width:30px;text-align:right;top:427.95px;font-size:5px;color:#6f7378"><span style="padding-bottom:0px">-</span></div><div class="a" style="left:442.00px;width:30px;text-align:right;top:427.95px;font-size:5px;color:#4a4f54"><span style="padding-bottom:0px">5</span></div><div class="a" style="left:507.10px;width:30px;text-align:right;top:427.95px;font-size:5px;color:#6f7378"><span style="padding-bottom:0px">-</span></div><div class="a" style="left:572.20px;width:30px;text-align:right;top:427.95px;font-size:5px;color:#4a4f54"><span style="padding-bottom:0px">10</span></div><div class="a" style="left:637.30px;width:30px;text-align:right;top:427.95px;font-size:5px;color:#4a4f54"><span style="padding-bottom:0px">6</span></div><div class="a" style="left:702.40px;width:30px;text-align:right;top:427.95px;font-size:5px;color:#6f7378"><span style="padding-bottom:0px">-</span></div><div class="a" style="left:767.50px;width:30px;text-align:right;top:427.95px;font-size:5px;color:#6f7378"><span style="padding-bottom:0px">-</span></div><div class="a" style="left:832.60px;width:30px;text-align:right;top:427.95px;font-size:5px;color:#6f7378"><span style="padding-bottom:0px">-</span></div><div class="a" style="left:899.80px;width:30px;text-align:right;top:427.95px;font-size:5px;color:#6f7378"><span style="padding-bottom:0px">-</span></div><svg class="a" style="left:947.3px;top:428.75px" width="3" height="2" viewBox="0 0 3 2"><path d="M0 0 H3 L1.5 1.8 Z" fill="#2a2f33"/></svg>
<div class="a" style="left:11.4px;top:446.95px;font-size:5px;font-weight:700;color:#2f3336;text-decoration:underline;text-decoration-thickness:0.4px;text-underline-offset:0.7px;text-decoration-color:#8a8e94">Skill 3</div><div class="a" style="left:181.60px;width:30px;text-align:right;top:447.05px;font-size:5px;color:#4a4f54"><span style="border-bottom:0.6px dashed #a9adb3;padding-bottom:0px">3</span></div><div class="a" style="left:246.70px;width:30px;text-align:right;top:447.05px;font-size:5px;color:#4a4f54"><span style="border-bottom:0.6px dashed #a9adb3;padding-bottom:0px">82</span></div><div class="a" style="left:311.80px;width:30px;text-align:right;top:447.05px;font-size:5px;color:#4a4f54"><span style="border-bottom:0.6px dashed #a9adb3;padding-bottom:0px">1</span></div><div class="a" style="left:376.90px;width:30px;text-align:right;top:447.05px;font-size:5px;color:#4a4f54"><span style="padding-bottom:0px">9</span></div><div class="a" style="left:442.00px;width:30px;text-align:right;top:447.05px;font-size:5px;color:#4a4f54"><span style="padding-bottom:0px">5</span></div><div class="a" style="left:507.10px;width:30px;text-align:right;top:447.05px;font-size:5px;color:#6f7378"><span style="padding-bottom:0px">-</span></div><div class="a" style="left:572.20px;width:30px;text-align:right;top:447.05px;font-size:5px;color:#4a4f54"><span style="padding-bottom:0px">5</span></div><div class="a" style="left:637.30px;width:30px;text-align:right;top:447.05px;font-size:5px;color:#4a4f54"><span style="padding-bottom:0px">30</span></div><div class="a" style="left:702.40px;width:30px;text-align:right;top:447.05px;font-size:5px;color:#6f7378"><span style="padding-bottom:0px">-</span></div><div class="a" style="left:767.50px;width:30px;text-align:right;top:447.05px;font-size:5px;color:#6f7378"><span style="padding-bottom:0px">-</span></div><div class="a" style="left:832.60px;width:30px;text-align:right;top:447.05px;font-size:5px;color:#6f7378"><span style="padding-bottom:0px">-</span></div><div class="a" style="left:899.80px;width:30px;text-align:right;top:447.05px;font-size:5px;color:#6f7378"><span style="padding-bottom:0px">-</span></div><svg class="a" style="left:947.3px;top:447.85px" width="3" height="2" viewBox="0 0 3 2"><path d="M0 0 H3 L1.5 1.8 Z" fill="#2a2f33"/></svg>
<div class="a" style="left:11.4px;top:466.05px;font-size:5px;font-weight:700;color:#2f3336;text-decoration:underline;text-decoration-thickness:0.4px;text-underline-offset:0.7px;text-decoration-color:#8a8e94">Skill 2</div><div class="a" style="left:181.60px;width:30px;text-align:right;top:466.15px;font-size:5px;color:#4a4f54"><span style="border-bottom:0.6px dashed #a9adb3;padding-bottom:0px">5</span></div><div class="a" style="left:246.70px;width:30px;text-align:right;top:466.15px;font-size:5px;color:#4a4f54"><span style="border-bottom:0.6px dashed #a9adb3;padding-bottom:0px">27</span></div><div class="a" style="left:311.80px;width:30px;text-align:right;top:466.15px;font-size:5px;color:#4a4f54"><span style="border-bottom:0.6px dashed #a9adb3;padding-bottom:0px">4</span></div><div class="a" style="left:376.90px;width:30px;text-align:right;top:466.15px;font-size:5px;color:#4a4f54"><span style="padding-bottom:0px">2</span></div><div class="a" style="left:442.00px;width:30px;text-align:right;top:466.15px;font-size:5px;color:#4a4f54"><span style="padding-bottom:0px">10</span></div><div class="a" style="left:507.10px;width:30px;text-align:right;top:466.15px;font-size:5px;color:#6f7378"><span style="padding-bottom:0px">-</span></div><div class="a" style="left:572.20px;width:30px;text-align:right;top:466.15px;font-size:5px;color:#4a4f54"><span style="padding-bottom:0px">24</span></div><div class="a" style="left:637.30px;width:30px;text-align:right;top:466.15px;font-size:5px;color:#4a4f54"><span style="padding-bottom:0px">15</span></div><div class="a" style="left:702.40px;width:30px;text-align:right;top:466.15px;font-size:5px;color:#6f7378"><span style="padding-bottom:0px">-</span></div><div class="a" style="left:767.50px;width:30px;text-align:right;top:466.15px;font-size:5px;color:#6f7378"><span style="padding-bottom:0px">-</span></div><div class="a" style="left:832.60px;width:30px;text-align:right;top:466.15px;font-size:5px;color:#6f7378"><span style="padding-bottom:0px">-</span></div><div class="a" style="left:899.80px;width:30px;text-align:right;top:466.15px;font-size:5px;color:#6f7378"><span style="padding-bottom:0px">-</span></div><svg class="a" style="left:947.3px;top:466.95px" width="3" height="2" viewBox="0 0 3 2"><path d="M0 0 H3 L1.5 1.8 Z" fill="#2a2f33"/></svg>
<div class="a" style="left:966.5px;top:363.1px;width:6px;height:117.6px;background:#f1f1f1"></div><div class="a" style="left:966.9px;top:391.9px;width:5.2px;height:62.7px;background:#c1c1c1"></div><svg class="a" style="left:967.6px;top:366.6px" width="4" height="3" viewBox="0 0 4 3"><path d="M0.4 2.4 H3.6 L2 0.6 Z" fill="#505050"/></svg><svg class="a" style="left:967.6px;top:475.6px" width="4" height="3" viewBox="0 0 4 3"><path d="M0.4 0.6 H3.6 L2 2.4 Z" fill="#505050"/></svg>

<!-- footer -->
<div class="a" style="left:0;top:535px;width:980px;height:16px;background:#f5f6fa;border-top:1px solid #dcdee3"></div>

<!-- footer content -->
<div class="a" style="left:23px;top:536px;width:0.8px;height:15px;background:#dcdee3"></div>
<div class="a" style="left:7.9px;top:542.2px;font-size:4.5px;color:#6f7378">Five9</div>
<div class="a" style="left:26.9px;top:542.3px;font-size:4.9px;color:#7d8186;letter-spacing:0px">Filters: <b style="color:#2f3336">new 1</b><span style="display:inline-block;width:8.2px"></span>Time Range: <b style="color:#2f3336">Day</b> &bull; Campaign Period: <b style="color:#2f3336">30 min</b> &bull; Skills: <b style="color:#2f3336">Call Sales</b> &bull; Agent Groups: <b style="color:#2f3336">All Groups</b></div>
<div class="a" style="left:850.5px;top:541.2px;font-size:5px;color:#6f7378">GMT-05:00 Thu, 4/11/2019, 1:14 pm</div>
<div class="a" style="left:936px;top:536px;width:0.8px;height:15px;background:#dcdee3"></div>
<div class="a" style="left:941.7px;top:540.8px;width:5.6px;height:5.6px;border-radius:50%;background:#d2153d"></div>
<svg class="a" style="left:943.1px;top:542.2px" width="2.8" height="2.8" viewBox="0 0 3 3"><path d="M0.5 0.5 L2.5 2.5 M2.5 0.5 L0.5 2.5" stroke="#fff" stroke-width="0.8"/></svg>
<svg class="a" style="left:951.5px;top:540.5px" width="7" height="6" viewBox="0 0 7 6"><path d="M0.5 2 H1.8 L3.6 0.5 V5.5 L1.8 4 H0.5 Z" fill="#8a8e94"/><path d="M4.6 1.6 Q5.6 3 4.6 4.4 M5.4 0.8 Q7 3 5.4 5.2" fill="none" stroke="#8a8e94" stroke-width="0.5"/></svg>
<svg class="a" style="left:966px;top:540px" width="5" height="7" viewBox="0 0 5 7"><rect x="1.4" y="0.3" width="2.2" height="4" rx="1.1" fill="#8a8e94"/><path d="M0.6 3.2 Q0.6 5.2 2.5 5.2 Q4.4 5.2 4.4 3.2 M2.5 5.2 V6.6" fill="none" stroke="#8a8e94" stroke-width="0.5"/></svg>
</body></html>
